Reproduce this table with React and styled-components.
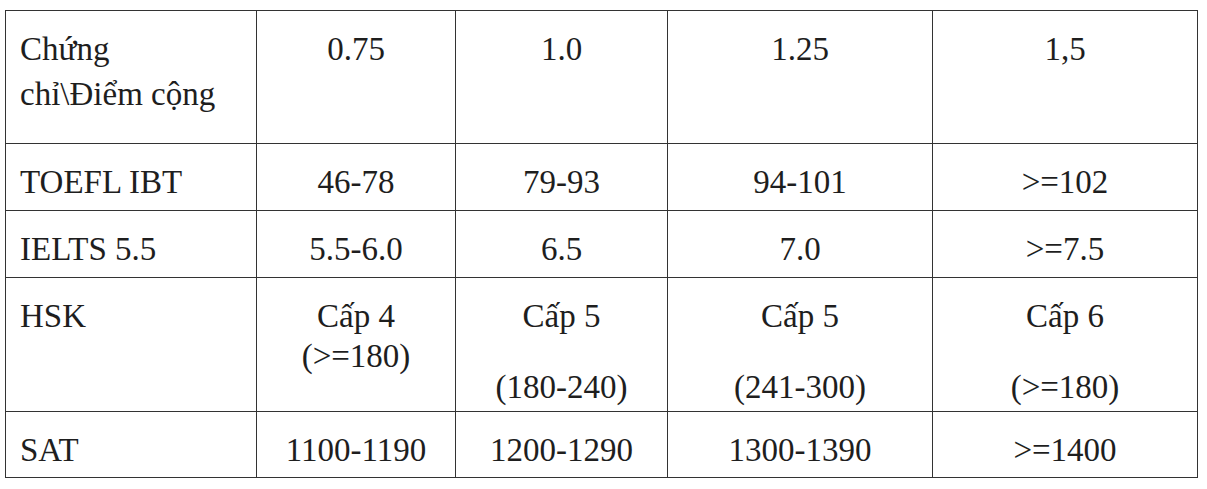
import React from 'react';
import styled, {createGlobalStyle} from 'styled-components';

const GlobalStyle = createGlobalStyle`
  html, body {
    margin: 0;
    padding: 0;
    background: #ffffff;
  }
  body {
    font-family: "Liberation Serif", "Times New Roman", serif;
    color: #1c1c1c;
  }
`;

// widths of the five columns, taken from the scan
const columns = [251, 199, 212, 265, 265];

const rows = [
  {
    height: 133,
    pad: 16,
    lh: 45,
    cells: [
      {lines: ['Chứng', 'chỉ\\Điểm cộng'], gap: 0},
      {lines: ['0.75']},
      {lines: ['1.0']},
      {lines: ['1.25']},
      {lines: ['1,5']},
    ],
  },
  {
    height: 67,
    cells: [
      {lines: ['TOEFL IBT']},
      {lines: ['46-78']},
      {lines: ['79-93']},
      {lines: ['94-101']},
      {lines: ['>=102']},
    ],
  },
  {
    height: 67,
    cells: [
      {lines: ['IELTS 5.5']},
      {lines: ['5.5-6.0']},
      {lines: ['6.5']},
      {lines: ['7.0']},
      {lines: ['>=7.5']},
    ],
  },
  {
    height: 134,
    cells: [
      {lines: ['HSK']},
      {lines: ['Cấp 4', '(>=180)'], gap: 0},
      {lines: ['Cấp 5', '(180-240)'], gap: 31},
      {lines: ['Cấp 5', '(241-300)'], gap: 31},
      {lines: ['Cấp 6', '(>=180)'], gap: 31},
    ],
  },
  {
    height: 66,
    cells: [
      {lines: ['SAT']},
      {lines: ['1100-1190']},
      {lines: ['1200-1290']},
      {lines: ['1300-1390']},
      {lines: ['>=1400']},
    ],
  },
];

const Page = styled.div`
  padding: 10px 0 0 5px;
`;

const Table = styled.table`
  border-collapse: collapse;
  table-layout: fixed;
  width: 1192px;
  font-family: "Liberation Serif", "Times New Roman", serif;
  font-size: 33px;
  color: #1e1e1e;
`;

const Row = styled.tr`
  height: ${(p) => p.$h}px;
`;

const Cell = styled.td`
  border: 1.5px solid #333333;
  vertical-align: top;
  padding: ${(p) => p.$pad}px 14px 0;
  text-align: ${(p) => (p.$first ? 'left' : 'center')};
  white-space: nowrap;
`;

const Lines = styled.div`
  display: flex;
  flex-direction: column;
  align-items: ${(p) => (p.$first ? 'flex-start' : 'center')};
  gap: ${(p) => p.$gap}px;
`;

const Line = styled.span`
  line-height: ${(p) => p.$lh}px;
`;

export default function App() {
  return (
    <Page>
      <GlobalStyle />
      <Table>
        <colgroup>
          {columns.map((w, i) => (
            <col key={i} style={{width: w}} />
          ))}
        </colgroup>
        <tbody>
          {rows.map((row, r) => (
            <Row key={r} $h={row.height}>
              {row.cells.map((cell, c) => (
                <Cell key={c} $first={c === 0} $pad={row.pad ?? 18}>
                  <Lines $first={c === 0} $gap={cell.gap ?? 0}>
                    {cell.lines.map((text) => (
                      <Line key={text} $lh={row.lh ?? 40}>
                        {text}
                      </Line>
                    ))}
                  </Lines>
                </Cell>
              ))}
            </Row>
          ))}
        </tbody>
      </Table>
    </Page>
  );
}
